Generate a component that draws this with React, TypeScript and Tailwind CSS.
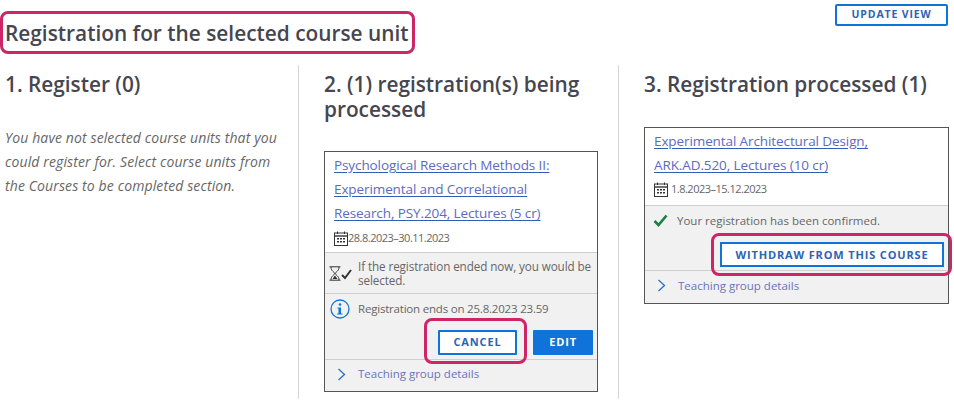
import React from "react";

const linkClass = "text-[#5a6bc4] underline underline-offset-2 decoration-[#2f5fb3]";
const headingClass = "text-[20.8px] leading-[25px] font-semibold text-[#45464f] mt-[7px]";

const CalendarIcon = () => (
  <svg width="14" height="15" viewBox="0 0 14 15" fill="none" className="shrink-0 text-[#333]">
    <rect x="0.5" y="2" width="13" height="12.5" stroke="currentColor" />
    <path d="M0.5 5h13" stroke="currentColor" strokeWidth="1.4" />
    <path d="M3.5 0.5v2.5M10.5 0.5v2.5" stroke="currentColor" />
    <path d="M3 7h2v1.5H3zM6 7h2v1.5H6zM9 7h2v1.5H9zM3 10h2v1.5H3zM6 10h2v1.5H6zM9 10h2v1.5H9z" fill="currentColor" />
  </svg>
);

const Chevron = () => (
  <svg width="9" height="13" viewBox="0 0 9 13" fill="none" className="shrink-0">
    <path d="M1.5 1l6 5.5-6 5.5" stroke="#2f6fc4" strokeWidth="1.3" />
  </svg>
);

// pink annotation drawn on top of the screenshot
const Mark = ({ className }: { className: string }) => (
  <span className={`absolute border-[3px] border-[#cd2567] rounded-[8px] pointer-events-none ${className}`} />
);

const OutlineButton = ({ children, className }: { children: React.ReactNode; className: string }) => (
  <button className={`h-[25px] border-2 border-[#0f73d9] bg-white text-[#2b63b8] font-bold tracking-[0.85px] ${className}`}>
    {children}
  </button>
);

const TeachingDetails = ({ className }: { className: string }) => (
  <div className={`flex items-center text-[#6a74b8] border-t border-[#cfcfcf] ${className}`}>
    <Chevron />
    <span className="ml-[12px]">Teaching group details</span>
  </div>
);

export default function App() {
  return (
    <div className="w-[954px] h-[407px] overflow-hidden bg-white text-[#444] font-['Open_Sans','Noto_Sans',sans-serif]">
      <div className="flex justify-between items-start pl-[5px] pr-[6px] h-[65px]">
        <div className="relative mt-[15px]">
          <h1 className="text-[20.85px] leading-[36px] font-semibold text-[#45464f] whitespace-nowrap">
            Registration for the selected course unit
          </h1>
          <Mark className="left-[-5px] right-[-6px] top-[-4px] bottom-[-3px]" />
        </div>
        <OutlineButton className="mt-[4px] w-[113px] !h-[22px] rounded-[2px] text-[10.5px]">UPDATE VIEW</OutlineButton>
      </div>

      <div className="flex h-[334px]">
        <section className="w-[299px] border-r border-[#d4d4d4] pl-[5px] pr-[18px]">
          <h2 className={headingClass}>1. Register (0)</h2>
          <p className="mt-[29px] text-[14px] tracking-[0.12px] leading-[24px] italic text-[#666]">
            You have not selected course units that you could register for. Select course units from the Courses to be completed section.
          </p>
        </section>

        <section className="w-[320px] border-r border-[#d4d4d4] pl-[25px] pr-[20px]">
          <h2 className={headingClass}>2. (1) registration(s) being processed</h2>
          <div className="mt-[29px] w-[274px] h-[241px] border border-[#555] bg-[#f1f1f1] text-[11.5px] text-[#666]">
            <div className="bg-white h-[100px] pl-[9px] pt-[1px]">
              <div className="text-[13.5px] leading-[24px] tracking-[-0.1px]">
                <a className={linkClass}>Psychological Research Methods II:</a>
                <br />
                <a className={linkClass}>Experimental and Correlational</a>
                <br />
                <a className={linkClass}>Research, PSY.204, Lectures (5 cr)</a>
              </div>
              <div className="flex items-center mt-[2px] h-[22px] text-[11px] tracking-[-0.5px]">
                <CalendarIcon />
                <span>28.8.2023–30.11.2023</span>
              </div>
            </div>
            <div className="flex items-center h-[41px] border-t border-[#cfcfcf] pl-[4px]">
              <svg width="23" height="15" viewBox="0 0 23 15" fill="none" className="shrink-0">
                <path d="M0.500 0.800h11M0.500 14.200h11M2 1c0 4.500 3.500 4.500 3.500 6.500S2 9.500 2 14M10 1c0 4.500-3.500 4.500-3.500 6.500S10 9.500 10 14" stroke="#333" />
                <path d="M3.500 13l2.500-3.500 2.500 3.500z" fill="#333" />
                <path d="M13 9l3 3 6-8" stroke="#333" strokeWidth="2" />
              </svg>
              <p className="ml-[6px] leading-[14px] text-[11.7px] tracking-[-0.1px]">If the registration ended now, you would be selected.</p>
            </div>
            <div className="border-t border-[#cfcfcf] h-[66px]">
              <div className="flex items-center pl-[5px] pt-[5px]">
                <svg width="20" height="20" viewBox="0 0 20 20" fill="none" className="shrink-0">
                  <circle cx="10" cy="10" r="9" stroke="#1673d6" strokeWidth="1.300" />
                  <circle cx="10" cy="5.500" r="1.300" fill="#1673d6" />
                  <path d="M7.500 8.500h3.500v6h1.500v1h-5.500v-1h1.500v-5h-1z" fill="#1673d6" />
                </svg>
                <span className="ml-[8px] tracking-[-0.2px]">Registration ends on 25.8.2023 23.59</span>
              </div>
              <div className="flex justify-end gap-[16px] pr-[4px] mt-[11px]">
                <div className="relative">
                  <OutlineButton className="w-[79px] rounded-[1px] text-[11px]">CANCEL</OutlineButton>
                  <Mark className="left-[-14px] right-[-10px] top-[-12px] bottom-[-9px]" />
                </div>
                <button className="w-[60px] h-[25px] bg-[#0f73d9] text-white text-[11px] font-bold tracking-[0.85px] rounded-[1px]">
                  EDIT
                </button>
              </div>
            </div>
            <TeachingDetails className="h-[32px] pl-[12px] pb-[3px]" />
          </div>
        </section>

        <section className="flex-1 pl-[25px] pr-[5px]">
          <h2 className={`${headingClass} whitespace-nowrap`}>3. Registration processed (1)</h2>
          <div className="mt-[30px] w-[305px] h-[177px] border border-[#555] bg-[#f1f1f1] text-[11.5px] text-[#666]">
            <div className="bg-white h-[77px] pl-[9px] pt-[1px]">
              <div className="text-[13.5px] leading-[24px] tracking-[-0.1px]">
                <a className={linkClass}>Experimental Architectural Design,</a>
                <br />
                <a className={linkClass}>ARK.AD.520, Lectures (10 cr)</a>
              </div>
              <div className="flex items-center mt-[1px] h-[22px] text-[11px] tracking-[-0.5px]">
                <CalendarIcon />
                <span className="ml-[3px]">1.8.2023–15.12.2023</span>
              </div>
            </div>
            <div className="border-t border-[#cfcfcf] h-[65px]">
              <div className="flex items-center pl-[8px] pt-[6px]">
                <svg width="15" height="13" viewBox="0 0 15 13" fill="none" className="shrink-0">
                  <path d="M1.500 7l4 4 8-9.500" stroke="#1e7e45" strokeWidth="2.600" />
                </svg>
                <span className="ml-[9px]">Your registration has been confirmed.</span>
              </div>
              <div className="flex justify-end pr-[4px] mt-[13px]">
                <div className="relative">
                  <OutlineButton className="w-[224px] text-[11px]">WITHDRAW FROM THIS COURSE</OutlineButton>
                  <Mark className="left-[-9px] right-[-8px] top-[-9px] bottom-[-9px]" />
                </div>
              </div>
            </div>
            <TeachingDetails className="h-[33px] pl-[12px] pb-[3px]" />
          </div>
        </section>
      </div>
    </div>
  );
}
